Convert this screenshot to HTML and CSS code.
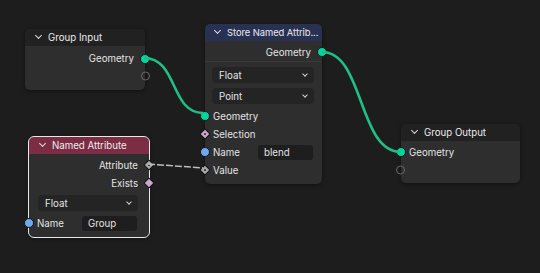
FILE: index.html
```html
<!DOCTYPE html>
<html lang="en">
<head>
  <meta charset="UTF-8">
  <title>Geometry Nodes</title>
  <link rel="stylesheet" href="styles.css">
</head>
<body>

<div class="editor">
  <svg class="links" width="540" height="273" viewBox="0 0 540 273">
    <path class="link" d="M144,58 C178,58 170,113 203,113"/>
    <path class="link" d="M322,52 C364,52 358,152 401,152"/>
    <path class="link-field" d="M148,164 L203,168"/>
  </svg>

  <!-- Group Input -->
  <div class="node node-input">
    <div class="node-header plain"><span class="chev"></span><span class="title">Group Input</span></div>
    <div class="node-body">
      <div class="row out">Geometry<span class="sock geo"></span></div>
      <div class="row out"><span class="sock empty"></span></div>
    </div>
  </div>

  <!-- Store Named Attribute -->
  <div class="node node-store">
    <div class="node-header blue"><span class="chev"></span><span class="title">Store Named Attrib...</span></div>
    <div class="node-body">
      <div class="row out sep">Geometry<span class="sock geo"></span></div>
      <div class="select">Float<span class="caret"></span></div>
      <div class="select">Point<span class="caret"></span></div>
      <div class="row in"><span class="sock geo"></span>Geometry</div>
      <div class="row in"><span class="sock diamond pink dot"></span>Selection</div>
      <div class="row in"><span class="sock str"></span>Name<span class="field">blend</span></div>
      <div class="row in"><span class="sock diamond grey dot"></span>Value</div>
    </div>
  </div>

  <!-- Named Attribute -->
  <div class="node node-attr selected">
    <div class="node-header red"><span class="chev"></span><span class="title">Named Attribute</span></div>
    <div class="node-body">
      <div class="row out">Attribute<span class="sock diamond grey dot"></span></div>
      <div class="row out">Exists<span class="sock diamond pink"></span></div>
      <div class="select">Float<span class="caret"></span></div>
      <div class="row in"><span class="sock str"></span>Name<span class="field">Group</span></div>
    </div>
  </div>

  <!-- Group Output -->
  <div class="node node-output">
    <div class="node-header plain"><span class="chev"></span><span class="title">Group Output</span></div>
    <div class="node-body">
      <div class="row in"><span class="sock geo"></span>Geometry</div>
      <div class="row in"><span class="sock empty"></span></div>
    </div>
  </div>
</div>

</body>
</html>
```

FILE: styles.css
```css
body { margin: 0; background: #1d1d1d; font-family: Inter, "Liberation Sans", sans-serif; font-size: 9.7px; color: #e4e4e4; }
.editor { position: relative; width: 540px; height: 273px; overflow: hidden; background: #1d1d1d; }

.links { position: absolute; left: 0; top: 0; z-index: 2; pointer-events: none; }
.link { fill: none; stroke: #1fbf86; stroke-width: 2.6; }
.link-field { fill: none; stroke: #bdbdbd; stroke-width: 1.5; stroke-dasharray: 7 2; }

.node { position: absolute; z-index: 1; border-radius: 5px; background: #2e2e2e; box-shadow: 0 1px 4px rgba(0,0,0,0.45); }
.node-input { left: 25px; top: 29px; width: 120px; }
.node-store { left: 205px; top: 24px; width: 117px; }
.node-attr { left: 29px; top: 137px; width: 120px; }
.node-output { left: 401px; top: 124px; width: 119px; }
.node.selected { outline: 1px solid #e8e8e8; }

.node-header { height: 17px; display: flex; align-items: center; padding-left: 10px; border-radius: 5px 5px 0 0; color: #ececec; white-space: nowrap; }
.node-header.plain { background: #212121; }
.node-header.blue { background: #283152; padding-left: 9px; }
.node-header.red { background: #7c2d45; }
.node-store .title { font-size: 9.4px; letter-spacing: -0.05px; }
.chev { flex-shrink: 0; width: 4px; height: 4px; border-right: 1.3px solid #dcdcdc; border-bottom: 1.3px solid #dcdcdc; transform: rotate(45deg); margin: 0 7px 0 1px; position: relative; top: -2px; }

.node-body { padding: 2px 0 5px; display: flex; flex-direction: column; }
.node-input .node-body { padding: 4px 0 6px; }
.node-input .row { height: 17px; }
.node-output .node-body { padding: 2px 0 4px; }

.row { position: relative; height: 18px; display: flex; align-items: center; }
.row.out { justify-content: flex-end; padding-right: 11px; }
.row.in { padding-left: 8px; }
.row.sep { border-bottom: 1px solid #383838; margin-bottom: 3px; }

.select { height: 16px; margin: 2px 8px 3px 7px; padding: 0 7px; background: #242424; border-radius: 4px; display: flex; align-items: center; justify-content: space-between; }
.node-attr .select { margin: 3px 11px 3px 9px; }
.caret { width: 3px; height: 3px; border-right: 1.2px solid #cfcfcf; border-bottom: 1.2px solid #cfcfcf; transform: rotate(45deg); position: relative; top: -1px; }

.field { margin-left: auto; margin-right: 9px; width: 49px; height: 15px; padding-left: 6px; background: #1e1e1e; border-radius: 3px; display: flex; align-items: center; }
.node-attr .field { margin-right: 12px; width: 49px; }

.sock { position: absolute; top: 50%; width: 8px; height: 8px; border-radius: 50%; border: 1px solid #151515; }
.row.out .sock { right: -5px; transform: translateY(-50%); }
.row.in .sock { left: -5px; transform: translateY(-50%); }
.sock.geo { background: #00d8a0; }
.sock.str { background: #6fa8ef; }
.sock.empty { background: transparent; border: 1.2px solid #6a6a6a; width: 7px; height: 7px; }
.sock.diamond { width: 6px; height: 6px; border-radius: 1px; }
.row.out .sock.diamond { right: -4px; transform: translateY(-50%) rotate(45deg); }
.row.in .sock.diamond { left: -4px; transform: translateY(-50%) rotate(45deg); }
.sock.grey { background: #a8a8a8; }
.sock.pink { background: #cfa5cf; }
.sock.dot::after { content: ""; position: absolute; left: 2px; top: 2px; width: 2px; height: 2px; background: #2a2a2a; border-radius: 50%; }
```
